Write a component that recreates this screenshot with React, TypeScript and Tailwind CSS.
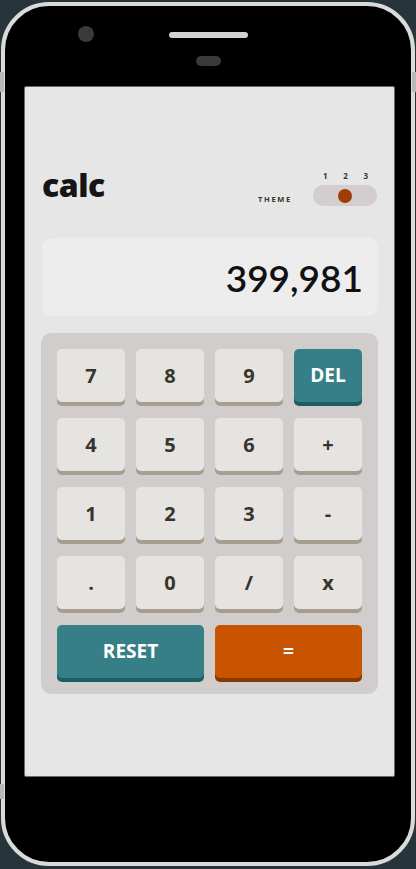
const keys = [
  { label: "7" },
  { label: "8" },
  { label: "9" },
  { label: "DEL", kind: "del" },
  { label: "4" },
  { label: "5" },
  { label: "6" },
  { label: "+" },
  { label: "1" },
  { label: "2" },
  { label: "3" },
  { label: "-" },
  { label: "." },
  { label: "0" },
  { label: "/" },
  { label: "x" },
];

function Key({ label, kind }: { label: string; kind?: string }) {
  if (kind === "del") {
    return (
      <button className="flex h-[53px] items-center justify-center rounded-[5px] bg-[#377f86] text-[19px] font-bold text-white shadow-[0_4px_0_#1b5f65]">
        {label}
      </button>
    );
  }
  return (
    <button className="flex h-[53px] items-center justify-center rounded-[5px] bg-[#e5e4e0] text-[20px] font-bold text-[#36362c] shadow-[0_4px_0_#a79e91]">
      {label}
    </button>
  );
}

export default function App() {
  return (
    <div
      className="h-[869px] w-[416px] overflow-hidden bg-[#27343a] pt-[2px] pl-[1px]"
      style={{ fontFamily: '"Open Sans", "Liberation Sans", sans-serif' }}
    >
      <div className="relative h-[864px] w-[414px] rounded-[48px] border-4 border-[#dadada] bg-black">
        {/* side buttons */}
        <div className="absolute -left-[5px] top-[66px] h-[20px] w-[4px] bg-[#b8b8b8]" />
        <div className="absolute -right-[5px] top-[66px] h-[20px] w-[4px] bg-[#b8b8b8]" />
        <div className="absolute -left-[5px] top-[778px] h-[15px] w-[4px] bg-[#b8b8b8]" />

        {/* top bezel */}
        <div className="relative h-[80px]">
          <div className="absolute left-[73px] top-[20px] h-[16px] w-[16px] rounded-full bg-[#3a3a3a]" />
          <div className="absolute left-[164px] top-[26px] h-[6px] w-[79px] rounded-full bg-[#d2d2d2]" />
          <div className="absolute left-[191px] top-[50px] h-[10px] w-[25px] rounded-full bg-[#3a3a3a]" />
        </div>

        {/* screen */}
        <div className="ml-[19px] h-[691px] w-[371px] rounded-[2px] border border-[#6b6b6b] bg-[#e6e6e6] px-[16px] pt-[82px]">
          <header className="flex items-end justify-between pl-[1px] pr-[1px]">
            <h1 className="mb-[5px] text-[32px] leading-none font-extrabold tracking-[-0.5px] text-[#151515]">
              calc
            </h1>
            <div className="flex items-end gap-[21px]">
              <span className="mb-[1px] text-[7.5px] font-bold tracking-[1.7px] text-[#36362c]">THEME</span>
              <div className="flex w-[64px] flex-col">
                <div className="flex justify-between pr-[9px] pl-[10px] text-[8px] leading-none font-bold text-[#36362c]">
                  <span>1</span>
                  <span>2</span>
                  <span>3</span>
                </div>
                <div className="mt-[5px] flex h-[21px] items-center justify-center rounded-full bg-[#d3cdcd]">
                  <div className="h-[14px] w-[14px] rounded-full bg-[#a03c04]" />
                </div>
              </div>
            </div>
          </header>

          <div className="mt-[32px] ml-[1px] flex h-[78px] w-[336px] items-center justify-end rounded-[10px] bg-[#ededed] pr-[15px]">
            <span
              className="text-[37px] leading-none font-semibold text-[#111]"
              style={{ fontFamily: '"Lato", "Open Sans", sans-serif' }}
            >
              399,981
            </span>
          </div>

          <div className="mt-[17px] w-[337px] rounded-[10px] bg-[#d2cdcd] p-[16px]">
            <div className="grid grid-cols-4 gap-x-[11px] gap-y-[16px]">
              {keys.map((k) => (
                <Key key={k.label} label={k.label} kind={k.kind} />
              ))}
              <button className="col-span-2 flex h-[53px] items-center justify-center rounded-[5px] bg-[#377f86] text-[19px] font-bold text-white shadow-[0_4px_0_#1b5f65]">
                RESET
              </button>
              <button className="col-span-2 flex h-[53px] items-center justify-center rounded-[5px] bg-[#c85402] text-[19px] font-bold text-white shadow-[0_4px_0_#873901]">
                =
              </button>
            </div>
          </div>
        </div>
      </div>
    </div>
  );
}
